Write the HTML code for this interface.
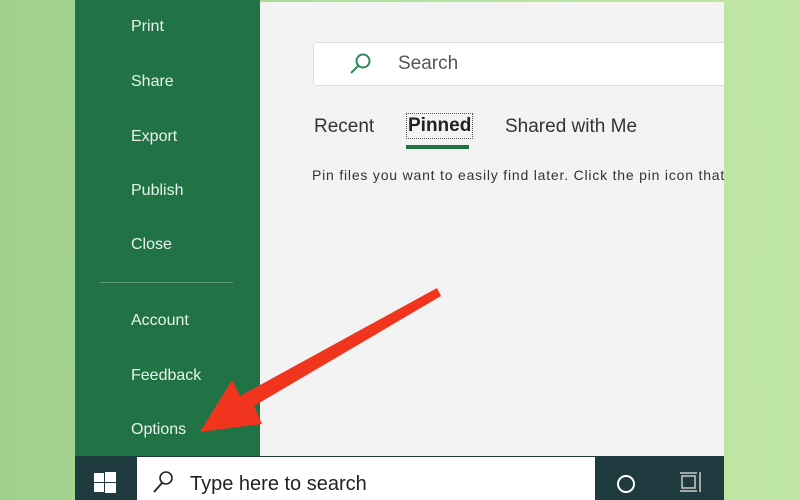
<!DOCTYPE html><html><head><style>
body{margin:0;width:800px;height:500px;overflow:hidden;background:linear-gradient(90deg,#9fd08c,#b9e3a0 60%,#bfe6a3);font-family:"Liberation Sans",sans-serif;position:relative}
.side{position:absolute;left:75px;top:0;width:185px;height:456px;background:#217346}
.side div{position:absolute;left:56px;color:#e8f2ec;font-size:16px}
.main{position:absolute;left:260px;top:2px;width:464px;height:454px;background:#f3f3f3;overflow:hidden}
.tb{position:absolute;left:75px;top:456px;width:649px;height:44px;background:#1f3b3f}
</style></head><body>
<div class="side">
<div style="top:18px">Print</div><div style="top:73px">Share</div><div style="top:128px">Export</div><div style="top:182px">Publish</div><div style="top:236px">Close</div>
<div style="left:25px;top:282px;width:133px;height:1px;background:#5f9a78"></div>
<div style="top:312px">Account</div><div style="top:367px">Feedback</div><div style="top:421px">Options</div>
</div>
<div class="main">
<div style="position:absolute;left:53px;top:40px;width:420px;height:42px;background:#fff;border:1px solid #ddd;border-radius:3px"></div>
<svg style="position:absolute;left:88px;top:49px" width="26" height="26"><circle cx="15" cy="10" r="6.5" fill="none" stroke="#2e8b57" stroke-width="2"/><line x1="10" y1="15" x2="3" y2="22" stroke="#2e8b57" stroke-width="2"/></svg>
<div style="position:absolute;left:138px;top:51px;font-size:19px;color:#555">Search</div>
<div style="position:absolute;left:54px;top:114px;font-size:19px;color:#333">Recent</div>
<div style="position:absolute;left:146px;top:111px;font-size:19px;color:#222;font-weight:bold;border:1px dotted #555;padding:1px 1px">Pinned</div>
<div style="position:absolute;left:146px;top:143px;width:63px;height:4px;background:#217346"></div>
<div style="position:absolute;left:245px;top:114px;font-size:19px;color:#333">Shared with Me</div>
<div style="position:absolute;left:52px;top:165px;font-size:14px;letter-spacing:0.8px;color:#333;white-space:nowrap">Pin files you want to easily find later. Click the pin icon that</div>
</div>
<div class="tb">
<svg style="position:absolute;left:19px;top:16px" width="22" height="22"><rect x="0" y="1" width="10" height="9" fill="#fff"/><rect x="11" y="0" width="11" height="10" fill="#fff"/><rect x="0" y="11" width="10" height="9" fill="#fff"/><rect x="11" y="11" width="11" height="10" fill="#fff"/></svg>
<div style="position:absolute;left:62px;top:1px;width:458px;height:43px;background:#fff"></div>
<svg style="position:absolute;left:76px;top:14px" width="24" height="24"><circle cx="15" cy="8" r="6" fill="none" stroke="#222" stroke-width="1.6"/><line x1="11" y1="13" x2="3" y2="22" stroke="#222" stroke-width="1.8"/></svg>
<div style="position:absolute;left:115px;top:17px;font-size:20px;color:#222">Type here to search</div>
<svg style="position:absolute;left:540px;top:16px" width="22" height="22"><circle cx="11" cy="12" r="8" fill="none" stroke="#fff" stroke-width="2"/></svg>
<svg style="position:absolute;left:604px;top:14px" width="24" height="26"><rect x="3" y="6" width="13" height="12" fill="none" stroke="#ccc" stroke-width="1.5"/><line x1="1" y1="3" x2="18" y2="3" stroke="#ccc" stroke-width="1.5"/><line x1="1" y1="21" x2="18" y2="21" stroke="#ccc" stroke-width="1.5"/><line x1="21" y1="2" x2="21" y2="22" stroke="#ccc" stroke-width="1.5"/></svg>
</div>
<svg style="position:absolute;left:0;top:0" width="800" height="500"><polygon points="437,288 441,296 254,406 262,424 200,432 232,380 240,396" fill="#f0341e"/></svg>
</body></html>
